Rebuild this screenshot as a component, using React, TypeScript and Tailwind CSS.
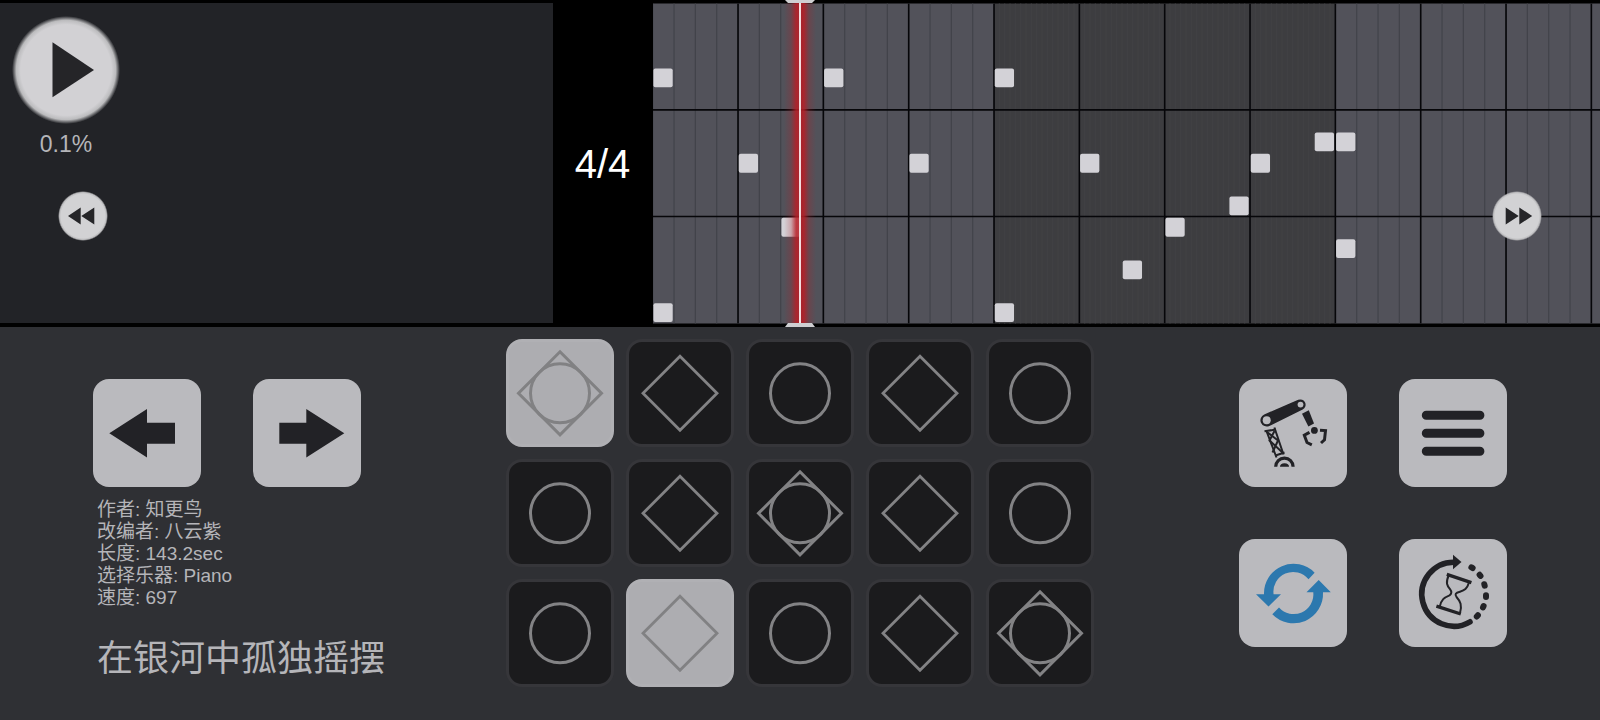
import type { ReactNode } from "react";

type Shape = "circle" | "diamond" | "both";

const CELL = 64 / 3;
const ROWS = 15;
const TOP = 3.5;
const BOTTOM = TOP + ROWS * CELL;
const MEASURES = 6;

// [step, row] - 16 steps per measure
const notes = [
  [0, 3],
  [0, 14],
  [4, 7],
  [6, 10],
  [8, 3],
  [12, 7],
  [16, 3],
  [16, 14],
  [20, 7],
  [22, 12],
  [24, 10],
  [27, 9],
  [28, 7],
  [31, 6],
  [32, 6],
  [32, 11],
];

const pads: { shape: Shape; active?: boolean }[] = [
  { shape: "both", active: true },
  { shape: "diamond" },
  { shape: "circle" },
  { shape: "diamond" },
  { shape: "circle" },
  { shape: "circle" },
  { shape: "diamond" },
  { shape: "both" },
  { shape: "diamond" },
  { shape: "circle" },
  { shape: "circle" },
  { shape: "diamond", active: true },
  { shape: "circle" },
  { shape: "diamond" },
  { shape: "both" },
];

const info = [
  "作者: 知更鸟",
  "改编者: 八云紫",
  "长度: 143.2sec",
  "选择乐器: Piano",
  "速度: 697",
];

function range(n: number) {
  return Array.from({ length: n }, (_, i) => i);
}

function PianoRoll() {
  const height = BOTTOM - TOP;
  return (
    <svg className="block h-full w-full" aria-label="Piano roll" role="img">
      <defs>
        <linearGradient id="glow">
          <stop offset="0" stopColor="#b01f28" stopOpacity="0" />
          <stop offset="0.22" stopColor="#b01f28" stopOpacity="0.25" />
          <stop offset="0.38" stopColor="#b81e26" stopOpacity="0.85" />
          <stop offset="0.62" stopColor="#b81e26" stopOpacity="0.85" />
          <stop offset="0.78" stopColor="#b01f28" stopOpacity="0.25" />
          <stop offset="1" stopColor="#b01f28" stopOpacity="0" />
        </linearGradient>
      </defs>

      {range(MEASURES).map((m) => {
        const dark = m % 2 === 1;
        const x = m * 16 * CELL;
        return (
          <g key={m}>
            <rect
              x={x}
              y={TOP}
              width={16 * CELL}
              height={height}
              fill={dark ? "#3d3d40" : "#52525a"}
            />
            {range(dark ? 64 : 16).map((i) => {
              const lx = x + i * (dark ? CELL / 4 : CELL) - 0.3;
              return (
                <line
                  key={i}
                  x1={lx}
                  x2={lx}
                  y1={TOP}
                  y2={BOTTOM}
                  stroke={dark ? "#414144" : "#42434a"}
                  strokeWidth="1.2"
                />
              );
            })}
          </g>
        );
      })}

      {range(MEASURES * 4).map((b) => (
        <line
          key={b}
          x1={b * 4 * CELL - 0.3}
          x2={b * 4 * CELL - 0.3}
          y1={TOP}
          y2={BOTTOM}
          stroke="#060609"
          strokeWidth={b === 0 ? 0 : 1.6}
        />
      ))}
      {[5, 10].map((r) => (
        <line
          key={r}
          x1="0"
          x2="100%"
          y1={TOP + r * CELL - 0.3}
          y2={TOP + r * CELL - 0.3}
          stroke="#060609"
          strokeWidth="1.6"
        />
      ))}

      {notes.map(([step, row]) => (
        <rect
          key={`${step}-${row}`}
          x={step * CELL + 0.4}
          y={TOP + row * CELL + 1}
          width="19.3"
          height="18.8"
          rx="2"
          fill="#d3d2d7"
        />
      ))}

      <rect x="131" y="3" width="32" height="320" fill="url(#glow)" />
      <rect x="146" y="3" width="2" height="320" fill="#f3dcde" />
      <path d="M132 0h30l-3 3h-24z" fill="#cfcfd2" />
      <path d="M132 327h30l-3-4h-24z" fill="#cfcfd2" />
    </svg>
  );
}

function SkipButton({ label, forward }: { label: string; forward?: boolean }) {
  return (
    <button
      aria-label={label}
      className="block size-[50px] rounded-full bg-[radial-gradient(closest-side,#d2d2d4_88%,#bcbcbe_94%,transparent)]"
    >
      <svg viewBox="0 0 50 50" fill="#252528">
        {forward ? (
          <path d="M13.7 16.5 26.7 25 13.7 33.5zM27.3 16.5 40.2 25 27.3 33.5z" />
        ) : (
          <path d="M22.7 16.5 10 25l12.700 8.500zM36.300 16.500 23.300 25l13 8.500z" />
        )}
      </svg>
    </button>
  );
}

function Tile({ label, children }: { label: string; children: ReactNode }) {
  return (
    <button
      aria-label={label}
      className="size-[108px] rounded-2xl bg-[#bababe] text-[#222226]"
    >
      <svg viewBox="0 0 108 108" fill="currentColor">
        {children}
      </svg>
    </button>
  );
}

function Pad({ shape, active }: { shape: Shape; active?: boolean }) {
  return (
    <button
      aria-label={`Pad ${shape}`}
      className={
        active
          ? "size-[108px] rounded-2xl border-3 border-[#b0b0b4] bg-[#adadb1] text-[#818183]"
          : "size-[108px] rounded-2xl border-3 border-[#36363a] bg-[#1b1b1d] text-[#838385]"
      }
    >
      <svg viewBox="3 3 102 102" fill="none" stroke="currentColor">
        {shape !== "diamond" && (
          <circle cx="54" cy="54.3" r="29.5" strokeWidth="3" />
        )}
        {shape === "diamond" && (
          <path d="M54 17.3 91 54.3 54 91.3 17 54.3z" strokeWidth="2.8" />
        )}
        {shape === "both" && (
          <path d="M54 12.8 95.5 54.3 54 95.8 12.5 54.3z" strokeWidth="3" />
        )}
      </svg>
    </button>
  );
}

function RobotArm() {
  return (
    <>
      <path d="M25.2 35.4 59.2 20.8a5.4 5.4 0 0 1 4.5 9.8L30.3 47a6.3 6.3 0 0 1-5.1-11.6z" />
      <circle cx="27.7" cy="41.3" r="4" fill="#bababe" />
      <circle cx="61.5" cy="25.6" r="2.9" fill="#bababe" />
      <path d="M63 34.8 69.8 31.2 75 44.4 69.4 47.4z" />
      <circle cx="75.4" cy="51.4" r="3.4" />
      <g fill="none" stroke="currentColor" strokeWidth="2">
        <path d="M27.3 51.5 37.5 78.5M35.4 48.5 44.5 75.5" />
        <path d="M25.5 52.3 37 50.5M28 53 39 61.500 33.500 73.500M35.500 52 30.500 61.500 43.500 73.500M36.500 76.500 45.500 73.500" />
      </g>
      <path
        d="M70.5 53.4 65.3 56.3 68 63.5 72.8 65.8M81 51.3 86.5 51.6 85.5 60.8 82 64"
        fill="none"
        stroke="currentColor"
        strokeWidth="3"
      />
      <path
        d="M36.7 87.8a8.7 8.7 0 0 1 17.4 0"
        fill="none"
        stroke="currentColor"
        strokeWidth="3.2"
      />
      <path d="M41 87.8a4.5 3.6 0 0 1 9 0z" />
    </>
  );
}

function Hourglass() {
  return (
    <g fill="none" stroke="currentColor">
      <path
        d="M55.5 23.2A32 32 0 1 0 71 82.8"
        strokeWidth="5.6"
        strokeLinecap="round"
      />
      <path d="M54 15.8 62.5 23 54 30.3z" fill="currentColor" stroke="none" />
      <path
        d="M72.4 28.3l1.200.800M80.600 35.800l.900 1.100M85.300 45.200l.400 1.500M87 56.200v1.700M84.600 67l-.600 1.400M78.900 76.300l-1.100 1.200"
        strokeWidth="6"
        strokeLinecap="round"
      />
      <path d="M47.8 35.400 72.400 43.600M37.400 67.200 61.800 75" strokeWidth="3.4" />
      <path
        d="M49.6 36.5C46.5 44 48 46.5 51 50.2 53 52.7 52.6 55 50.5 56.3 45 58.7 42.5 60.5 40.8 67.5M70 43.5C68 50 65.5 51.5 61 52.7 56.5 53.8 55.5 55.5 57.5 58 61.5 62.5 63.2 66 61 74"
        strokeWidth="2"
      />
    </g>
  );
}

export default function App() {
  return (
    <main className="min-h-screen bg-[#2f3034] font-['Liberation_Sans','Noto_Sans_CJK_SC',sans-serif] text-[#b5b5b9]">
      <section
        aria-label="Timeline"
        className="relative flex h-[327px] overflow-hidden bg-black"
      >
        <div className="mt-[3px] mb-1 flex w-[553px] shrink-0 flex-col items-start bg-[#222327] px-3 pt-[13px]">
          <div className="flex flex-col items-center">
            <button
              aria-label="Play"
              className="size-[108px] rounded-full bg-[radial-gradient(closest-side,#d2d1d4_84%,#bcbcbe_92%,#222327)]"
            >
              <svg viewBox="0 0 108 108" fill="#252528">
                <path d="M40.5 26.3 82 54 40.5 81.3z" />
              </svg>
            </button>
            <p className="mt-2 text-[23px] leading-6">0.1%</p>
          </div>
          <div className="mt-[35px] ml-[46px]">
            <SkipButton label="Rewind" />
          </div>
        </div>
        <p className="flex w-[99px] shrink-0 items-center justify-center text-[40px] text-white">
          4/4
        </p>
        <div className="ml-px min-w-0 flex-1">
          <PianoRoll />
        </div>
        <div className="absolute right-[58px] bottom-[86px]">
          <SkipButton label="Fast forward" forward />
        </div>
      </section>

      <section
        aria-label="Controls"
        className="grid grid-cols-[1fr_auto_1fr] px-[93px] pt-3"
      >
        <div className="pt-10">
          <div className="flex gap-[52px]">
            <Tile label="Previous">
              <path d="M16.3 54.3 54 30V43.8H82V64.8H54V78.6z" />
            </Tile>
            <Tile label="Next">
              <path d="M91.300 54.300 53.300 30V43.800H26.300V64.800H53.300V78.600z" />
            </Tile>
          </div>
          <ul className="mt-3 ml-1 text-[19px] leading-[22px]">
            {info.map((line) => (
              <li key={line}>{line}</li>
            ))}
          </ul>
          <h1 className="mt-[26px] ml-1 text-[36px] leading-[48px]">
            在银河中孤独摇摆
          </h1>
        </div>

        <div className="grid grid-cols-5 gap-3 self-start">
          {pads.map((pad, i) => (
            <Pad key={i} {...pad} />
          ))}
        </div>

        <div className="grid grid-cols-[auto_auto] gap-[52px] justify-self-end self-start pt-10">
          <Tile label="Auto play">
            <RobotArm />
          </Tile>
          <Tile label="Menu">
            <path
              d="M27.300 36.300h53.600M27.300 54.300h53.600M27.300 72.300h53.600"
              stroke="currentColor"
              strokeWidth="9"
              strokeLinecap="round"
            />
          </Tile>
          <Tile label="Reload">
            <g fill="#2c78ae">
              <path d="M75.6 33.7A29.5 29.5 0 0 0 25 55.3H17L29.500 67.500 42 55.300H34.600A19.700 19.700 0 0 1 69.500 40.300z" />
              <path d="M33.300 75.300A29.500 29.500 0 0 0 84 53.300H91.800L79.700 41 67.500 53.300H74.300A19.700 19.700 0 0 1 40 68.500z" />
            </g>
          </Tile>
          <Tile label="History">
            <Hourglass />
          </Tile>
        </div>
      </section>
    </main>
  );
}
